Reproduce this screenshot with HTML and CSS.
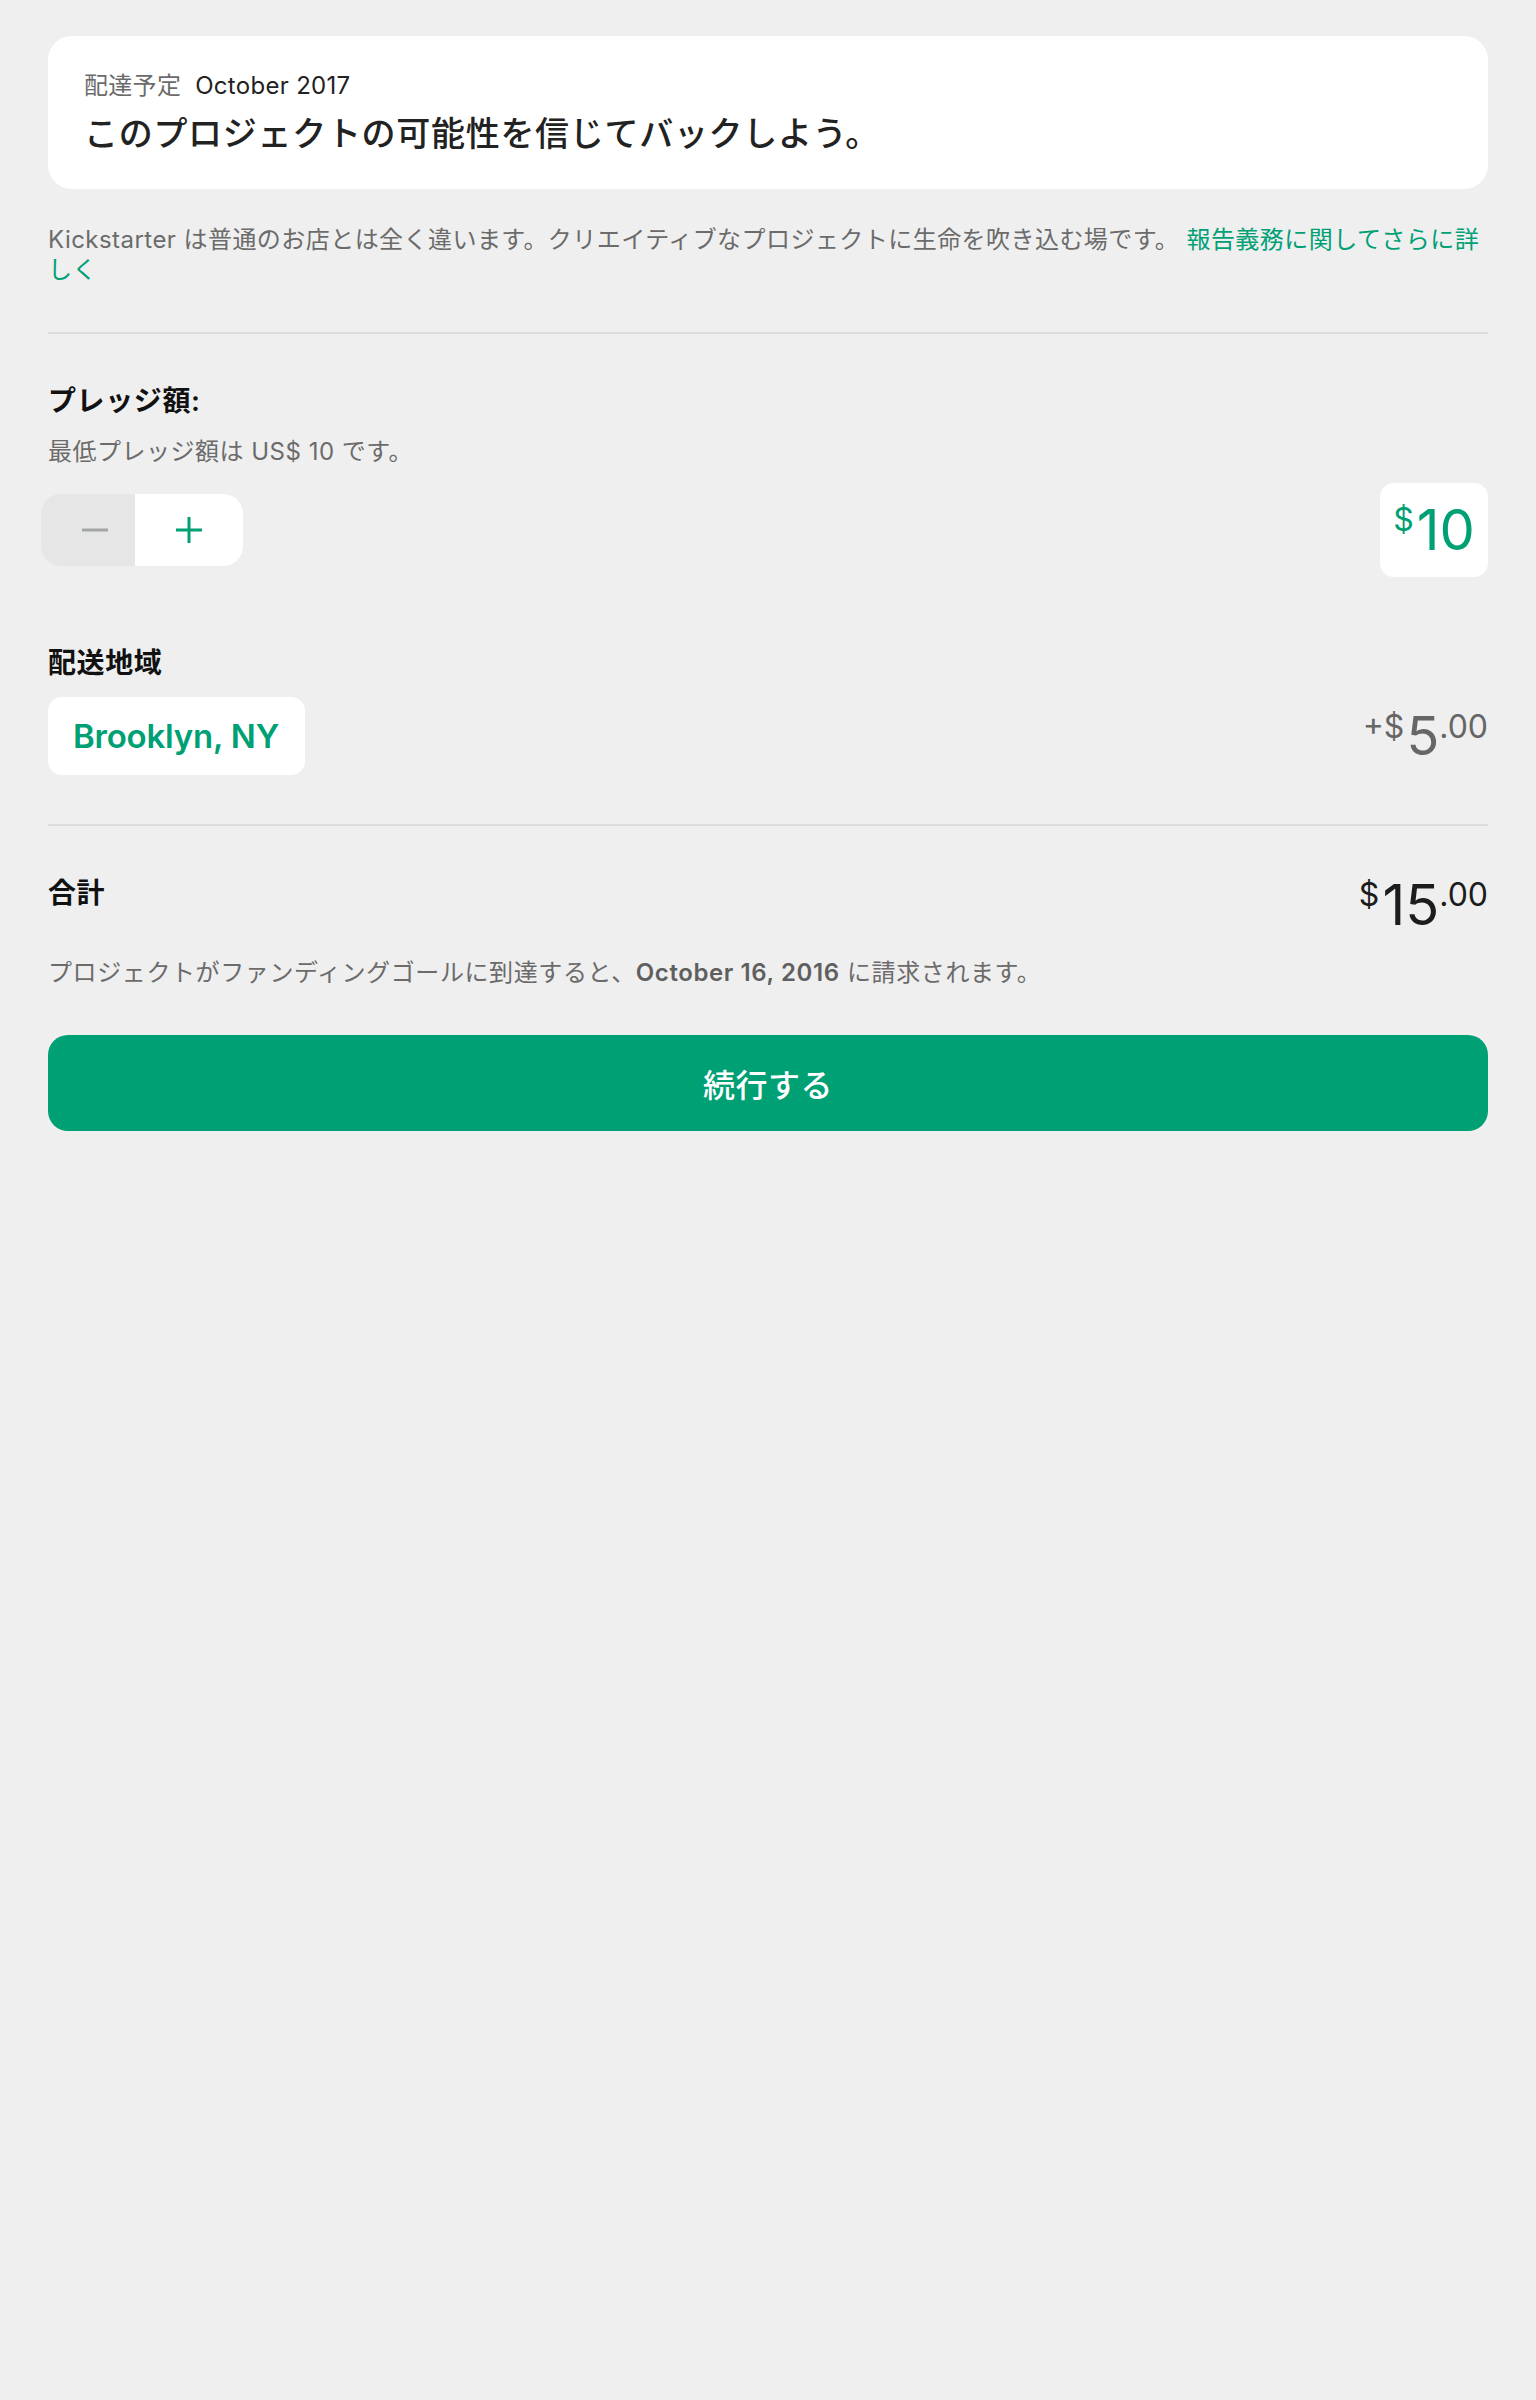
FILE: index.html
```html
<!DOCTYPE html>
<html lang="ja">
<head>
<meta charset="utf-8">
<title>Pledge</title>
<link rel="stylesheet" href="styles.css">
</head>
<body>
<main class="page">
  <section class="card">
    <div class="delivery"><span class="delivery-label">配達予定</span><span class="delivery-date">October 2017</span></div>
    <h1 class="card-title">このプロジェクトの可能性を信じてバックしよう。</h1>
  </section>

  <p class="notice">Kickstarter は普通のお店とは全く違います。クリエイティブなプロジェクトに生命を吹き込む場です。 <a class="link" href="#">報告義務に関してさらに詳しく</a></p>

  <div class="divider"></div>

  <h2 class="section-title pledge-title">プレッジ額:</h2>
  <p class="hint">最低プレッジ額は US$ 10 です。</p>

  <div class="pledge-row">
    <div class="stepper">
      <button class="step step-minus" aria-label="減らす">
        <svg width="26" height="26" viewBox="0 0 26 26"><line x1="0" y1="13" x2="26" y2="13" stroke="#a2a7a5" stroke-width="3"/></svg>
      </button>
      <button class="step step-plus" aria-label="増やす">
        <svg width="26" height="26" viewBox="0 0 26 26"><line x1="0" y1="13" x2="26" y2="13" stroke="#00a075" stroke-width="3"/><line x1="13" y1="0" x2="13" y2="26" stroke="#00a075" stroke-width="3"/></svg>
      </button>
    </div>
    <div class="amount-box">
      <span class="price price-green"><span class="cur">$</span><span class="big">10</span></span>
    </div>
  </div>

  <h2 class="section-title ship-title">配送地域</h2>
  <div class="ship-row">
    <div class="location">Brooklyn, NY</div>
    <span class="price price-gray"><span class="cur">+$</span><span class="big big-sm">5</span><span class="cents">.00</span></span>
  </div>

  <div class="divider divider-2"></div>

  <div class="total-row">
    <h2 class="section-title total-title">合計</h2>
    <span class="price price-dark total-price"><span class="cur">$</span><span class="big">15</span><span class="cents">.00</span></span>
  </div>

  <p class="charge">プロジェクトがファンディングゴールに到達すると、<strong>October 16, 2016</strong> に請求されます。</p>

  <button class="continue">続行する</button>
</main>
</body>
</html>
```

FILE: styles.css
```css
* { box-sizing: border-box; }

html, body {
  margin: 0;
  padding: 0;
  background: #efefef;
}

body {
  font-family: "Inter", "Noto Sans CJK JP", sans-serif;
  color: #222;
  min-height: 2400px;
}

.page {
  padding: 36px 48px 0 48px;
  display: flex;
  flex-direction: column;
}

.card {
  background: #fff;
  border-radius: 24px;
  padding: 35px 36px 34px;
  display: flex;
  flex-direction: column;
  gap: 12px;
}

.delivery {
  font-size: 24px;
  line-height: 30px;
  display: flex;
  letter-spacing: 0.3px;
}

.delivery-label {
  color: #6b6b6b;
  margin-right: 14px;
}

.delivery-date {
  color: #222;
}

.card-title {
  margin: 0;
  font-size: 34px;
  line-height: 42px;
  font-weight: 500;
  color: #222;
  letter-spacing: 0.7px;
}

.notice {
  margin: 36px 0 0;
  font-size: 24px;
  line-height: 30px;
  color: #6b6b6b;
  letter-spacing: 0.45px;
}

.link {
  color: #00a075;
  text-decoration: none;
}

.divider {
  margin-top: 47px;
  height: 2px;
  background: #dcdcdc;
}

.divider-2 {
  margin-top: 49px;
}

.section-title {
  margin: 0;
  font-size: 28px;
  line-height: 34px;
  font-weight: 600;
  color: #111;
  letter-spacing: 0.6px;
}

.pledge-title { margin-top: 50px; }

.hint {
  margin: 19px 0 0;
  font-size: 24px;
  line-height: 30px;
  color: #6b6b6b;
  letter-spacing: 0.5px;
}

.pledge-row {
  margin-top: 16px;
  display: flex;
  justify-content: space-between;
  align-items: center;
  height: 94px;
}

.stepper {
  display: flex;
  height: 72px;
  margin-left: -7px;
  border-radius: 20px;
  overflow: hidden;
}

.step {
  border: 0;
  margin: 0;
  padding: 0 0 0 41px;
  display: flex;
  align-items: center;
  height: 72px;
  cursor: pointer;
}

.step svg { display: block; }

.step-minus {
  width: 94px;
  background: #e6e6e6;
}

.step-plus {
  width: 108px;
  background: #fff;
}

.amount-box {
  width: 108px;
  height: 94px;
  background: #fff;
  border-radius: 14px;
  display: flex;
  align-items: center;
  justify-content: center;
}

.price {
  display: inline-flex;
  align-items: flex-start;
  line-height: 1;
}

.price .cur,
.price .cents {
  font-size: 32px;
  margin-top: 2px;
}

.price .big {
  font-size: 56px;
}

.price .big-sm {
  font-size: 54px;
}

.price-green { color: #00a075; }
.price-gray { color: #666; }
.price-dark { color: #1c1c1c; }

.price-green .cur { margin-right: 3px; }
.price-gray .cur { margin-right: 2px; }
.price-dark .cur { margin-right: 3px; }

.ship-title { margin-top: 69px; }

.ship-row {
  margin-top: 17px;
  display: flex;
  justify-content: space-between;
  align-items: center;
}

.location {
  height: 78px;
  padding: 0 26px 0 25px;
  background: #fff;
  border-radius: 14px;
  display: flex;
  align-items: center;
  font-size: 33px;
  font-weight: 600;
  color: #00a075;
  letter-spacing: -0.2px;
}

.total-row {
  margin-top: 50px;
  display: flex;
  justify-content: space-between;
  align-items: flex-start;
}

.total-price {
  margin-top: 1px;
}

.charge {
  margin: 25px 0 0;
  font-size: 24px;
  line-height: 30px;
  color: #6b6b6b;
  letter-spacing: 0.6px;
}

.charge strong {
  font-weight: 600;
  color: #5f5f5f;
}

.continue {
  margin-top: 47px;
  height: 96px;
  border: 0;
  border-radius: 20px;
  background: #00a075;
  color: #fff;
  font-family: "Inter", "Noto Sans CJK JP", sans-serif;
  font-size: 32px;
  font-weight: 500;
  letter-spacing: 0.5px;
  cursor: pointer;
}
```
